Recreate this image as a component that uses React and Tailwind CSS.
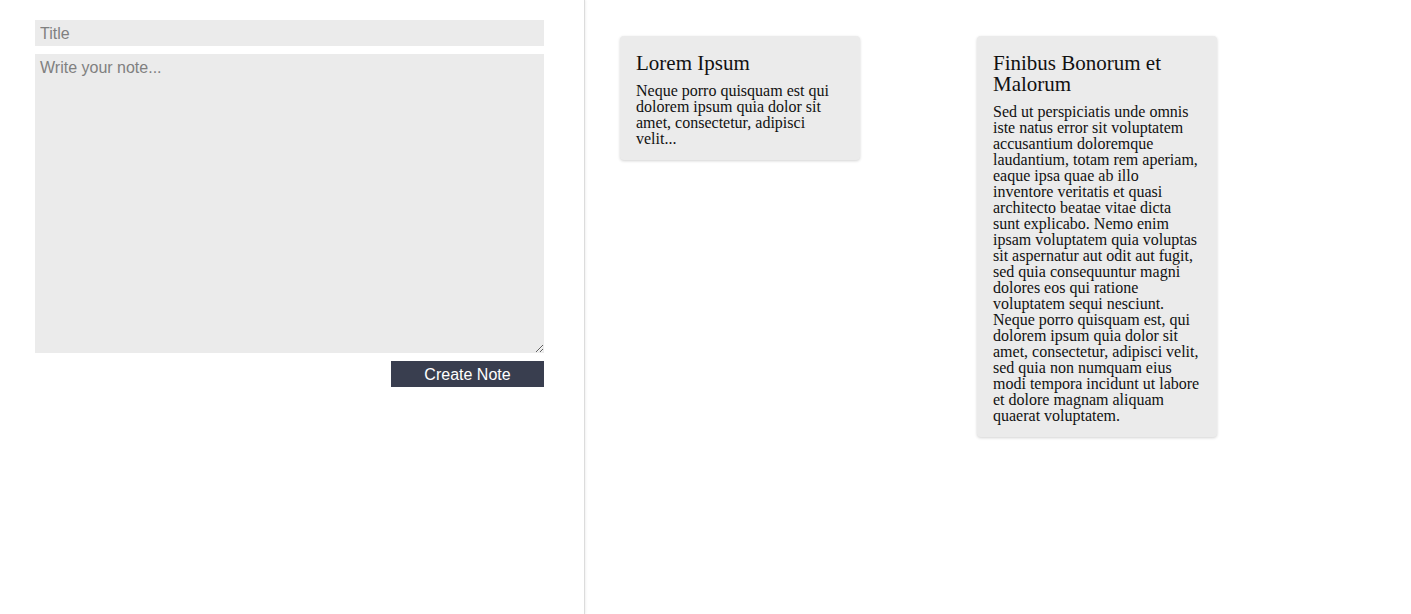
const notes = [
  {
    title: "Lorem Ipsum",
    body: "Neque porro quisquam est qui dolorem ipsum quia dolor sit amet, consectetur, adipisci velit...",
  },
  {
    title: "Finibus Bonorum et Malorum",
    body: "Sed ut perspiciatis unde omnis iste natus error sit voluptatem accusantium doloremque laudantium, totam rem aperiam, eaque ipsa quae ab illo inventore veritatis et quasi architecto beatae vitae dicta sunt explicabo. Nemo enim ipsam voluptatem quia voluptas sit aspernatur aut odit aut fugit, sed quia consequuntur magni dolores eos qui ratione voluptatem sequi nesciunt. Neque porro quisquam est, qui dolorem ipsum quia dolor sit amet, consectetur, adipisci velit, sed quia non numquam eius modi tempora incidunt ut labore et dolore magnam aliquam quaerat voluptatem.",
  },
]

function NoteCard({ note }) {
  return (
    <div className="w-[240px] bg-[#ebebeb] rounded-[4px] shadow-[0_1px_3px_rgba(0,0,0,0.18)] px-4 pt-[17px] pb-[13px] font-['Liberation_Serif',serif] text-[#111]">
      <h2 className="text-[21px] leading-[21px] mb-[9px]">{note.title}</h2>
      <p className="text-[16px] leading-4">{note.body}</p>
    </div>
  )
}

export default function App() {
  return (
    <div className="flex min-h-[614px] bg-white font-['Liberation_Sans',Arial,sans-serif]">

      {/* EDITOR */}
      <div className="w-[585px] shrink-0 border-r border-[#dcdcdc] shadow-[1px_0_2px_rgba(0,0,0,0.06)] pl-[35px] pr-[40px] pt-5">
        <input
          type="text"
          placeholder="Title"
          className="block w-full h-[26px] bg-[#ebebeb] px-[5px] pt-[2px] text-[16px] text-[#333] placeholder:text-[#808080] outline-none"
        />
        <textarea
          placeholder="Write your note..."
          className="block w-full h-[299px] mt-2 bg-[#ebebeb] px-[5px] py-[4px] text-[16px] leading-[19px] text-[#333] placeholder:text-[#808080] outline-none resize-y"
        />
        <div className="flex justify-end mt-2">
          <button className="w-[153px] h-[26px] pt-[2px] bg-[#393e4f] text-white text-[16px]">
            Create Note
          </button>
        </div>
      </div>

      {/* NOTES */}
      <div className="flex items-start gap-[117px] pl-[35px] pt-9">
        {notes.map((n) => (
          <NoteCard key={n.title} note={n} />
        ))}
      </div>

    </div>
  )
}
